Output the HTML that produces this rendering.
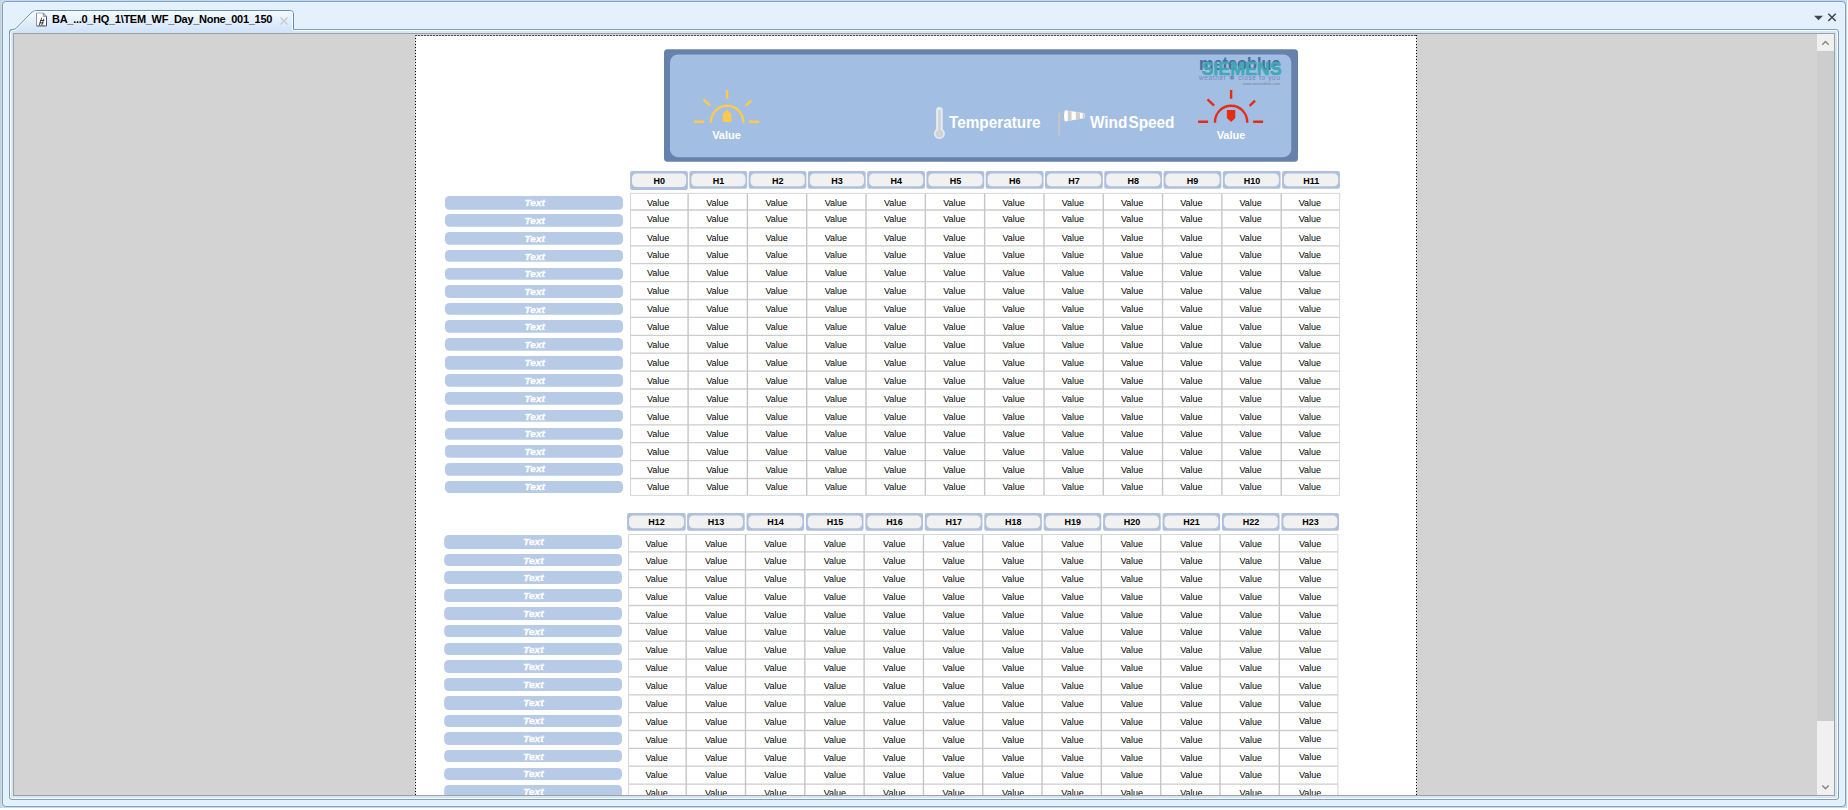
<!DOCTYPE html>
<html lang="en"><head><meta charset="utf-8"><title>TEM_WF_Day_None_001_150</title>
<style>
html,body{margin:0;padding:0;background:#fff;}
body{width:1848px;height:810px;overflow:hidden;position:relative;font-family:"Liberation Sans",sans-serif;}
.abs{position:absolute;}
#edge{left:0;top:0;width:1px;height:808px;background:#d4d0c8;}
#halo{left:1px;top:0;width:1846px;height:808px;background:#bfdcfb;}
#outer{left:2px;top:1px;width:1842px;height:804px;border:1px solid #7e9fbf;border-radius:4px;background:#e4f0fc;box-shadow:inset 0 0 0 1px #ebf5fe;}
#frame{left:9px;top:29px;width:1828px;height:769px;border:1px solid #7e9fbf;border-radius:3px;background:#d5e6f8;box-shadow:inset 0 0 0 1px #ffffff;}
#viewb{left:13px;top:33px;width:1820px;height:761px;border:1px solid #a0a0a0;background:#d3d3d3;}
#view{left:14px;top:34px;width:1820px;height:761px;overflow:hidden;background:#d3d3d3;}
#sb{left:1803px;top:0;width:17px;height:761px;background:#f0f0f0;}
#thumb{left:0;top:17px;width:17px;height:670px;background:#cdcdcd;}
svg text{font-family:"Liberation Sans",sans-serif;}
#tabtxt{left:52px;top:11px;height:17px;line-height:17px;font-size:11px;letter-spacing:-0.29px;font-weight:bold;color:#000;white-space:nowrap;}
</style></head>
<body>
<div class="abs" id="edge"></div>
<div class="abs" id="halo"></div>
<div class="abs" id="outer"></div>
<div class="abs" id="frame"></div>
<svg class="abs" style="left:0;top:0" width="400" height="34" viewBox="0 0 400 34">
<defs><linearGradient id="tg" x1="0" y1="0" x2="0" y2="1"><stop offset="0" stop-color="#f7fbff"/><stop offset="0.45" stop-color="#e4effc"/><stop offset="1" stop-color="#cfe2f8"/></linearGradient></defs>
<path d="M10.5 33 V32 Q10.5 29.5 13 29.5 Q15 29.5 16.5 28 L31 13 Q33.5 10.5 37 10.5 H290 Q293.5 10.5 293.5 14 V29.5 V33 Z" fill="url(#tg)"/>
<path d="M9.5 34 V32.5 Q9.5 29.5 13 29.5 Q15 29.5 16.5 28 L31 13 Q33.5 10.5 37 10.5 H290 Q293.5 10.5 293.5 14 V29.5" fill="none" stroke="#5c93b4" stroke-width="1"/>
<path d="M10.5 34 V32.5 Q10.5 30.5 13 30.5 Q15.5 30.5 17.2 28.8 L31.8 13.8 Q34 11.5 37 11.5 H290 Q292.5 11.5 292.5 14 V30.5" fill="none" stroke="#ffffff" stroke-width="1"/>
<g transform="translate(36,12.5)"><path d="M0.5 0.5 H7.3 L10.5 3.9 V13.6 H0.5 Z" fill="#fff"/><path d="M0.5 13.6 V0.5" stroke="#8f8db6" fill="none"/><path d="M0.5 0.5 H7.3" stroke="#aeacd0" fill="none"/><path d="M7.3 0.5 L10.5 3.9 V13.6" stroke="#4a5082" fill="none"/><path d="M0.5 13.6 H10.5" stroke="#6a6f98" fill="none"/><path d="M7.3 0.5 V3.9 H10.5" fill="#c9cce0" stroke="#6a6f98" stroke-width="0.7"/><path d="M3.3 12.9 L5.7 5.2 M5.7 12.9 L7.9 6.2 M4.3 8 H8.3 M3.3 10.4 H7.6" stroke="#1c1c1c" stroke-width="0.8" fill="none"/><path d="M1.6 12.9 H9.4" stroke="#66756a" stroke-width="0.8" fill="none"/></g>
<path d="M280.5 17.5 L287.5 24.5 M287.5 17.5 L280.5 24.5" stroke="#c9c9c9" stroke-width="1.3" fill="none"/>
</svg>
<div class="abs" id="tabtxt">BA_...0_HQ_1\TEM_WF_Day_None_001_150</div>
<svg class="abs" style="left:1808px;top:10px" width="34" height="16" viewBox="1808 10 34 16">
<path d="M1814 15.8 H1823 L1818.5 20.2 Z" fill="#3c4650"/>
<path d="M1828.3 13.8 L1835.7 21 M1835.7 13.8 L1828.3 21" stroke="#3c4650" stroke-width="1.5" fill="none"/>
</svg>
<div class="abs" id="viewb"></div>
<div class="abs" id="view">
<svg class="abs" style="left:0;top:0" width="1803" height="761" viewBox="14 34 1803 761">
<rect x="416" y="36" width="1000" height="800" fill="#fff"/>
<path d="M415.5 35 V800" stroke="#000" stroke-width="1" stroke-dasharray="1 2" fill="none"/>
<path d="M1416.5 35 V800" stroke="#000" stroke-width="1" stroke-dasharray="1 2" fill="none"/>
<path d="M415 35.5 H1417" stroke="#4a4a4a" stroke-width="1" stroke-dasharray="2 1" fill="none"/>
<rect x="664" y="49.2" width="634" height="112.6" rx="3.5" fill="#6482ab"/>
<rect x="670" y="54.4" width="621.3" height="102.8" rx="8" fill="#a3bee3"/>
<g stroke="#ffca4b" stroke-width="2.4" fill="none"><path d="M711.0 122.7 V121.9 A16.1 16.1 0 0 1 743.2 121.9 V122.7"/><path d="M727.1 90 V98.8"/><path d="M694.1 121.8 H704.1 M749.1 121.8 H759.1"/><path d="M703.5 99.3 L710.1 105.6 M745.6 105.8 L751.1 100.6"/></g><path d="M722.8 122 V113.8 L727.1 110 L731.4 113.8 V122 Z" fill="#ffca4b"/>
<g stroke="#e62d14" stroke-width="2.4" fill="none"><path d="M1215.0 122.7 V121.9 A16.1 16.1 0 0 1 1247.2 121.9 V122.7"/><path d="M1231.1 90 V98.8"/><path d="M1198.1 121.8 H1208.1 M1253.1 121.8 H1263.1"/><path d="M1207.5 99.3 L1214.1 105.6 M1249.6 105.8 L1255.1 100.6"/></g><path d="M1226.9 110 H1235.3 V118 L1231.1 122 L1226.9 118 Z" fill="#e62d14"/>
<text x="726.5" y="139" font-size="11" font-weight="bold" fill="#fff" text-anchor="middle">Value</text>
<text x="1231" y="139" font-size="11" font-weight="bold" fill="#fff" text-anchor="middle">Value</text>
<g><path d="M936.1 110.3 A3.3 3.3 0 0 1 942.7 110.3 V129.2 A5.5 5.5 0 1 1 936.1 129.2 Z" fill="#e7eaf2"/><path d="M938.2 111 A1.3 1.3 0 0 1 940.8 111 V130 A3.9 3.9 0 1 1 938.2 130 Z" fill="#d3d3d3"/></g>
<text x="949" y="128" font-size="17" font-weight="bold" fill="#fff" textLength="91.6" lengthAdjust="spacingAndGlyphs">Temperature</text>
<g><rect x="1058" y="112.4" width="2" height="23.5" fill="#c4c4c4"/><path d="M1060 116 L1065 110.6 M1060 116 L1065 121.2" stroke="#c4c4c4" stroke-width="1" fill="none"/><path d="M1065 110.2 Q1063 116 1065 121.6 L1084.8 118 V113.2 Z" fill="#fff"/><path d="M1067.8 110.7 L1071.6 111.4 V120.4 L1067.8 121.1 Z M1075.8 112 L1080 112.6 V118.9 L1075.8 119.6 Z M1082.6 113 L1084.8 113.3 V118 L1082.6 118.4 Z" fill="#cfcfcf"/></g>
<text x="1090" y="128" font-size="17" font-weight="bold" fill="#fff" textLength="84.5" lengthAdjust="spacingAndGlyphs">Wind<tspan dx="1.2">Speed</tspan></text>
<text x="1199" y="69.6" font-size="19" font-weight="bold" fill="#4b6b9c" textLength="81.5" lengthAdjust="spacingAndGlyphs">meteoblue</text>
<text x="1199" y="80" font-size="6.5" fill="#6d8aba" textLength="81" lengthAdjust="spacing">weather ✱ close to you</text>
<text x="1243" y="85" font-size="3.6" fill="#7a7f95" textLength="37" lengthAdjust="spacingAndGlyphs">www.meteoblue.com</text>
<text x="1201.5" y="74.9" font-size="18.2" font-weight="bold" fill="#40a9b5" stroke="#40a9b5" stroke-width="0.5" textLength="80" lengthAdjust="spacingAndGlyphs">SIEMENS</text>
<rect x="630.10" y="170.9" width="57.8" height="19.0" rx="2" fill="#afc0da"/><rect x="632.00" y="173.5" width="54.2" height="13.5" rx="4.5" fill="#f1f1f1"/><text x="659.20" y="184.0" font-size="9" font-weight="bold" fill="#000" text-anchor="middle">H0</text>
<rect x="689.37" y="170.9" width="57.8" height="17.9" rx="2" fill="#afc0da"/><rect x="691.27" y="173.5" width="54.2" height="12.8" rx="4.5" fill="#f1f1f1"/><text x="718.47" y="184.0" font-size="9" font-weight="bold" fill="#000" text-anchor="middle">H1</text>
<rect x="748.64" y="170.9" width="57.8" height="17.9" rx="2" fill="#afc0da"/><rect x="750.54" y="173.5" width="54.2" height="12.8" rx="4.5" fill="#f1f1f1"/><text x="777.74" y="184.0" font-size="9" font-weight="bold" fill="#000" text-anchor="middle">H2</text>
<rect x="807.91" y="170.9" width="57.8" height="17.9" rx="2" fill="#afc0da"/><rect x="809.81" y="173.5" width="54.2" height="12.8" rx="4.5" fill="#f1f1f1"/><text x="837.01" y="184.0" font-size="9" font-weight="bold" fill="#000" text-anchor="middle">H3</text>
<rect x="867.18" y="170.9" width="57.8" height="17.9" rx="2" fill="#afc0da"/><rect x="869.08" y="173.5" width="54.2" height="12.8" rx="4.5" fill="#f1f1f1"/><text x="896.28" y="184.0" font-size="9" font-weight="bold" fill="#000" text-anchor="middle">H4</text>
<rect x="926.45" y="170.9" width="57.8" height="17.9" rx="2" fill="#afc0da"/><rect x="928.35" y="173.5" width="54.2" height="12.8" rx="4.5" fill="#f1f1f1"/><text x="955.55" y="184.0" font-size="9" font-weight="bold" fill="#000" text-anchor="middle">H5</text>
<rect x="985.72" y="170.9" width="57.8" height="17.9" rx="2" fill="#afc0da"/><rect x="987.62" y="173.5" width="54.2" height="12.8" rx="4.5" fill="#f1f1f1"/><text x="1014.82" y="184.0" font-size="9" font-weight="bold" fill="#000" text-anchor="middle">H6</text>
<rect x="1044.99" y="170.9" width="57.8" height="17.9" rx="2" fill="#afc0da"/><rect x="1046.89" y="173.5" width="54.2" height="12.8" rx="4.5" fill="#f1f1f1"/><text x="1074.09" y="184.0" font-size="9" font-weight="bold" fill="#000" text-anchor="middle">H7</text>
<rect x="1104.26" y="170.9" width="57.8" height="17.9" rx="2" fill="#afc0da"/><rect x="1106.16" y="173.5" width="54.2" height="12.8" rx="4.5" fill="#f1f1f1"/><text x="1133.36" y="184.0" font-size="9" font-weight="bold" fill="#000" text-anchor="middle">H8</text>
<rect x="1163.53" y="170.9" width="57.8" height="17.9" rx="2" fill="#afc0da"/><rect x="1165.43" y="173.5" width="54.2" height="12.8" rx="4.5" fill="#f1f1f1"/><text x="1192.63" y="184.0" font-size="9" font-weight="bold" fill="#000" text-anchor="middle">H9</text>
<rect x="1222.80" y="170.9" width="57.8" height="17.9" rx="2" fill="#afc0da"/><rect x="1224.70" y="173.5" width="54.2" height="12.8" rx="4.5" fill="#f1f1f1"/><text x="1251.90" y="184.0" font-size="9" font-weight="bold" fill="#000" text-anchor="middle">H10</text>
<rect x="1282.07" y="170.9" width="57.8" height="17.9" rx="2" fill="#afc0da"/><rect x="1283.97" y="173.5" width="54.2" height="12.8" rx="4.5" fill="#f1f1f1"/><text x="1311.17" y="184.0" font-size="9" font-weight="bold" fill="#000" text-anchor="middle">H11</text>
<path d="M630.55 210.00 H1339.60 M630.55 227.90 H1339.60 M630.55 245.80 H1339.60 M630.55 263.70 H1339.60 M630.55 281.60 H1339.60 M630.55 299.50 H1339.60 M630.55 317.40 H1339.60 M630.55 335.30 H1339.60 M630.55 353.20 H1339.60 M630.55 371.10 H1339.60 M630.55 389.00 H1339.60 M630.55 406.90 H1339.60 M630.55 424.80 H1339.60 M630.55 442.70 H1339.60 M630.55 460.60 H1339.60 M630.55 478.50 H1339.60 " stroke="#cdcdcd" stroke-width="1.3" fill="none"/><path d="M688.10 193.40 V495.40 M747.41 193.40 V495.40 M806.72 193.40 V495.40 M866.03 193.40 V495.40 M925.34 193.40 V495.40 M984.65 193.40 V495.40 M1043.96 193.40 V495.40 M1103.27 193.40 V495.40 M1162.58 193.40 V495.40 M1221.89 193.40 V495.40 M1281.20 193.40 V495.40 " stroke="#c6c6c6" stroke-width="1.4" fill="none"/><path d="M630.55 193.40 H1339.60 V495.40 H630.55 Z" stroke="#d2d2d2" stroke-width="0.9" fill="none"/>
<g font-size="9" fill="#000" text-anchor="middle"><text x="658.10" y="206">Value</text><text x="717.36" y="206">Value</text><text x="776.62" y="206">Value</text><text x="835.88" y="206">Value</text><text x="895.14" y="206">Value</text><text x="954.40" y="206">Value</text><text x="1013.66" y="206">Value</text><text x="1072.92" y="206">Value</text><text x="1132.18" y="206">Value</text><text x="1191.44" y="206">Value</text><text x="1250.70" y="206">Value</text><text x="1309.96" y="206">Value</text></g>
<g font-size="9" fill="#000" text-anchor="middle"><text x="658.10" y="222">Value</text><text x="717.36" y="222">Value</text><text x="776.62" y="222">Value</text><text x="835.88" y="222">Value</text><text x="895.14" y="222">Value</text><text x="954.40" y="222">Value</text><text x="1013.66" y="222">Value</text><text x="1072.92" y="222">Value</text><text x="1132.18" y="222">Value</text><text x="1191.44" y="222">Value</text><text x="1250.70" y="222">Value</text><text x="1309.96" y="222">Value</text></g>
<g font-size="9" fill="#000" text-anchor="middle"><text x="658.10" y="241">Value</text><text x="717.36" y="241">Value</text><text x="776.62" y="241">Value</text><text x="835.88" y="241">Value</text><text x="895.14" y="241">Value</text><text x="954.40" y="241">Value</text><text x="1013.66" y="241">Value</text><text x="1072.92" y="241">Value</text><text x="1132.18" y="241">Value</text><text x="1191.44" y="241">Value</text><text x="1250.70" y="241">Value</text><text x="1309.96" y="241">Value</text></g>
<g font-size="9" fill="#000" text-anchor="middle"><text x="658.10" y="258">Value</text><text x="717.36" y="258">Value</text><text x="776.62" y="258">Value</text><text x="835.88" y="258">Value</text><text x="895.14" y="258">Value</text><text x="954.40" y="258">Value</text><text x="1013.66" y="258">Value</text><text x="1072.92" y="258">Value</text><text x="1132.18" y="258">Value</text><text x="1191.44" y="258">Value</text><text x="1250.70" y="258">Value</text><text x="1309.96" y="258">Value</text></g>
<g font-size="9" fill="#000" text-anchor="middle"><text x="658.10" y="276">Value</text><text x="717.36" y="276">Value</text><text x="776.62" y="276">Value</text><text x="835.88" y="276">Value</text><text x="895.14" y="276">Value</text><text x="954.40" y="276">Value</text><text x="1013.66" y="276">Value</text><text x="1072.92" y="276">Value</text><text x="1132.18" y="276">Value</text><text x="1191.44" y="276">Value</text><text x="1250.70" y="276">Value</text><text x="1309.96" y="276">Value</text></g>
<g font-size="9" fill="#000" text-anchor="middle"><text x="658.10" y="294">Value</text><text x="717.36" y="294">Value</text><text x="776.62" y="294">Value</text><text x="835.88" y="294">Value</text><text x="895.14" y="294">Value</text><text x="954.40" y="294">Value</text><text x="1013.66" y="294">Value</text><text x="1072.92" y="294">Value</text><text x="1132.18" y="294">Value</text><text x="1191.44" y="294">Value</text><text x="1250.70" y="294">Value</text><text x="1309.96" y="294">Value</text></g>
<g font-size="9" fill="#000" text-anchor="middle"><text x="658.10" y="312">Value</text><text x="717.36" y="312">Value</text><text x="776.62" y="312">Value</text><text x="835.88" y="312">Value</text><text x="895.14" y="312">Value</text><text x="954.40" y="312">Value</text><text x="1013.66" y="312">Value</text><text x="1072.92" y="312">Value</text><text x="1132.18" y="312">Value</text><text x="1191.44" y="312">Value</text><text x="1250.70" y="312">Value</text><text x="1309.96" y="312">Value</text></g>
<g font-size="9" fill="#000" text-anchor="middle"><text x="658.10" y="330">Value</text><text x="717.36" y="330">Value</text><text x="776.62" y="330">Value</text><text x="835.88" y="330">Value</text><text x="895.14" y="330">Value</text><text x="954.40" y="330">Value</text><text x="1013.66" y="330">Value</text><text x="1072.92" y="330">Value</text><text x="1132.18" y="330">Value</text><text x="1191.44" y="330">Value</text><text x="1250.70" y="330">Value</text><text x="1309.96" y="330">Value</text></g>
<g font-size="9" fill="#000" text-anchor="middle"><text x="658.10" y="348">Value</text><text x="717.36" y="348">Value</text><text x="776.62" y="348">Value</text><text x="835.88" y="348">Value</text><text x="895.14" y="348">Value</text><text x="954.40" y="348">Value</text><text x="1013.66" y="348">Value</text><text x="1072.92" y="348">Value</text><text x="1132.18" y="348">Value</text><text x="1191.44" y="348">Value</text><text x="1250.70" y="348">Value</text><text x="1309.96" y="348">Value</text></g>
<g font-size="9" fill="#000" text-anchor="middle"><text x="658.10" y="366">Value</text><text x="717.36" y="366">Value</text><text x="776.62" y="366">Value</text><text x="835.88" y="366">Value</text><text x="895.14" y="366">Value</text><text x="954.40" y="366">Value</text><text x="1013.66" y="366">Value</text><text x="1072.92" y="366">Value</text><text x="1132.18" y="366">Value</text><text x="1191.44" y="366">Value</text><text x="1250.70" y="366">Value</text><text x="1309.96" y="366">Value</text></g>
<g font-size="9" fill="#000" text-anchor="middle"><text x="658.10" y="384">Value</text><text x="717.36" y="384">Value</text><text x="776.62" y="384">Value</text><text x="835.88" y="384">Value</text><text x="895.14" y="384">Value</text><text x="954.40" y="384">Value</text><text x="1013.66" y="384">Value</text><text x="1072.92" y="384">Value</text><text x="1132.18" y="384">Value</text><text x="1191.44" y="384">Value</text><text x="1250.70" y="384">Value</text><text x="1309.96" y="384">Value</text></g>
<g font-size="9" fill="#000" text-anchor="middle"><text x="658.10" y="402">Value</text><text x="717.36" y="402">Value</text><text x="776.62" y="402">Value</text><text x="835.88" y="402">Value</text><text x="895.14" y="402">Value</text><text x="954.40" y="402">Value</text><text x="1013.66" y="402">Value</text><text x="1072.92" y="402">Value</text><text x="1132.18" y="402">Value</text><text x="1191.44" y="402">Value</text><text x="1250.70" y="402">Value</text><text x="1309.96" y="402">Value</text></g>
<g font-size="9" fill="#000" text-anchor="middle"><text x="658.10" y="420">Value</text><text x="717.36" y="420">Value</text><text x="776.62" y="420">Value</text><text x="835.88" y="420">Value</text><text x="895.14" y="420">Value</text><text x="954.40" y="420">Value</text><text x="1013.66" y="420">Value</text><text x="1072.92" y="420">Value</text><text x="1132.18" y="420">Value</text><text x="1191.44" y="420">Value</text><text x="1250.70" y="420">Value</text><text x="1309.96" y="420">Value</text></g>
<g font-size="9" fill="#000" text-anchor="middle"><text x="658.10" y="437">Value</text><text x="717.36" y="437">Value</text><text x="776.62" y="437">Value</text><text x="835.88" y="437">Value</text><text x="895.14" y="437">Value</text><text x="954.40" y="437">Value</text><text x="1013.66" y="437">Value</text><text x="1072.92" y="437">Value</text><text x="1132.18" y="437">Value</text><text x="1191.44" y="437">Value</text><text x="1250.70" y="437">Value</text><text x="1309.96" y="437">Value</text></g>
<g font-size="9" fill="#000" text-anchor="middle"><text x="658.10" y="455">Value</text><text x="717.36" y="455">Value</text><text x="776.62" y="455">Value</text><text x="835.88" y="455">Value</text><text x="895.14" y="455">Value</text><text x="954.40" y="455">Value</text><text x="1013.66" y="455">Value</text><text x="1072.92" y="455">Value</text><text x="1132.18" y="455">Value</text><text x="1191.44" y="455">Value</text><text x="1250.70" y="455">Value</text><text x="1309.96" y="455">Value</text></g>
<g font-size="9" fill="#000" text-anchor="middle"><text x="658.10" y="473">Value</text><text x="717.36" y="473">Value</text><text x="776.62" y="473">Value</text><text x="835.88" y="473">Value</text><text x="895.14" y="473">Value</text><text x="954.40" y="473">Value</text><text x="1013.66" y="473">Value</text><text x="1072.92" y="473">Value</text><text x="1132.18" y="473">Value</text><text x="1191.44" y="473">Value</text><text x="1250.70" y="473">Value</text><text x="1309.96" y="473">Value</text></g>
<g font-size="9" fill="#000" text-anchor="middle"><text x="658.10" y="490">Value</text><text x="717.36" y="490">Value</text><text x="776.62" y="490">Value</text><text x="835.88" y="490">Value</text><text x="895.14" y="490">Value</text><text x="954.40" y="490">Value</text><text x="1013.66" y="490">Value</text><text x="1072.92" y="490">Value</text><text x="1132.18" y="490">Value</text><text x="1191.44" y="490">Value</text><text x="1250.70" y="490">Value</text><text x="1309.96" y="490">Value</text></g>
<rect x="445.0" y="196.00" width="178.0" height="13.80" rx="4.5" fill="#b7cbe7"/><text x="534.7" y="206" font-size="9.6" font-weight="bold" font-style="italic" fill="#fff" stroke="#fff" stroke-width="0.3" text-anchor="middle" textLength="20.2" lengthAdjust="spacingAndGlyphs">Text</text>
<rect x="445.0" y="214.00" width="178.0" height="12.80" rx="4.5" fill="#b7cbe7"/><text x="534.7" y="224" font-size="9.6" font-weight="bold" font-style="italic" fill="#fff" stroke="#fff" stroke-width="0.3" text-anchor="middle" textLength="20.2" lengthAdjust="spacingAndGlyphs">Text</text>
<rect x="445.0" y="232.00" width="178.0" height="12.80" rx="4.5" fill="#b7cbe7"/><text x="534.7" y="242" font-size="9.6" font-weight="bold" font-style="italic" fill="#fff" stroke="#fff" stroke-width="0.3" text-anchor="middle" textLength="20.2" lengthAdjust="spacingAndGlyphs">Text</text>
<rect x="445.0" y="250.00" width="178.0" height="11.80" rx="4.5" fill="#b7cbe7"/><text x="534.7" y="260" font-size="9.6" font-weight="bold" font-style="italic" fill="#fff" stroke="#fff" stroke-width="0.3" text-anchor="middle" textLength="20.2" lengthAdjust="spacingAndGlyphs">Text</text>
<rect x="445.0" y="268.00" width="178.0" height="11.70" rx="4.5" fill="#b7cbe7"/><text x="534.7" y="277" font-size="9.6" font-weight="bold" font-style="italic" fill="#fff" stroke="#fff" stroke-width="0.3" text-anchor="middle" textLength="20.2" lengthAdjust="spacingAndGlyphs">Text</text>
<rect x="445.0" y="285.00" width="178.0" height="13.00" rx="4.5" fill="#b7cbe7"/><text x="534.7" y="295" font-size="9.6" font-weight="bold" font-style="italic" fill="#fff" stroke="#fff" stroke-width="0.3" text-anchor="middle" textLength="20.2" lengthAdjust="spacingAndGlyphs">Text</text>
<rect x="445.0" y="303.00" width="178.0" height="11.80" rx="4.5" fill="#b7cbe7"/><text x="534.7" y="313" font-size="9.6" font-weight="bold" font-style="italic" fill="#fff" stroke="#fff" stroke-width="0.3" text-anchor="middle" textLength="20.2" lengthAdjust="spacingAndGlyphs">Text</text>
<rect x="445.0" y="320.00" width="178.0" height="12.70" rx="4.5" fill="#b7cbe7"/><text x="534.7" y="330" font-size="9.6" font-weight="bold" font-style="italic" fill="#fff" stroke="#fff" stroke-width="0.3" text-anchor="middle" textLength="20.2" lengthAdjust="spacingAndGlyphs">Text</text>
<rect x="445.0" y="338.00" width="178.0" height="12.80" rx="4.5" fill="#b7cbe7"/><text x="534.7" y="348" font-size="9.6" font-weight="bold" font-style="italic" fill="#fff" stroke="#fff" stroke-width="0.3" text-anchor="middle" textLength="20.2" lengthAdjust="spacingAndGlyphs">Text</text>
<rect x="445.0" y="356.00" width="178.0" height="13.80" rx="4.5" fill="#b7cbe7"/><text x="534.7" y="366" font-size="9.6" font-weight="bold" font-style="italic" fill="#fff" stroke="#fff" stroke-width="0.3" text-anchor="middle" textLength="20.2" lengthAdjust="spacingAndGlyphs">Text</text>
<rect x="445.0" y="374.00" width="178.0" height="12.80" rx="4.5" fill="#b7cbe7"/><text x="534.7" y="384" font-size="9.6" font-weight="bold" font-style="italic" fill="#fff" stroke="#fff" stroke-width="0.3" text-anchor="middle" textLength="20.2" lengthAdjust="spacingAndGlyphs">Text</text>
<rect x="445.0" y="392.00" width="178.0" height="12.80" rx="4.5" fill="#b7cbe7"/><text x="534.7" y="402" font-size="9.6" font-weight="bold" font-style="italic" fill="#fff" stroke="#fff" stroke-width="0.3" text-anchor="middle" textLength="20.2" lengthAdjust="spacingAndGlyphs">Text</text>
<rect x="445.0" y="410.00" width="178.0" height="11.80" rx="4.5" fill="#b7cbe7"/><text x="534.7" y="420" font-size="9.6" font-weight="bold" font-style="italic" fill="#fff" stroke="#fff" stroke-width="0.3" text-anchor="middle" textLength="20.2" lengthAdjust="spacingAndGlyphs">Text</text>
<rect x="445.0" y="428.00" width="178.0" height="11.80" rx="4.5" fill="#b7cbe7"/><text x="534.7" y="437" font-size="9.6" font-weight="bold" font-style="italic" fill="#fff" stroke="#fff" stroke-width="0.3" text-anchor="middle" textLength="20.2" lengthAdjust="spacingAndGlyphs">Text</text>
<rect x="445.0" y="445.00" width="178.0" height="12.80" rx="4.5" fill="#b7cbe7"/><text x="534.7" y="455" font-size="9.6" font-weight="bold" font-style="italic" fill="#fff" stroke="#fff" stroke-width="0.3" text-anchor="middle" textLength="20.2" lengthAdjust="spacingAndGlyphs">Text</text>
<rect x="445.0" y="463.00" width="178.0" height="12.80" rx="4.5" fill="#b7cbe7"/><text x="534.7" y="472" font-size="9.6" font-weight="bold" font-style="italic" fill="#fff" stroke="#fff" stroke-width="0.3" text-anchor="middle" textLength="20.2" lengthAdjust="spacingAndGlyphs">Text</text>
<rect x="445.0" y="481.00" width="178.0" height="12.00" rx="4.5" fill="#b7cbe7"/><text x="534.7" y="490" font-size="9.6" font-weight="bold" font-style="italic" fill="#fff" stroke="#fff" stroke-width="0.3" text-anchor="middle" textLength="20.2" lengthAdjust="spacingAndGlyphs">Text</text>
<rect x="627.10" y="512.9" width="58.6" height="17.9" rx="2" fill="#afc0da"/><rect x="629.00" y="515.5" width="55.0" height="12.8" rx="4.5" fill="#f1f1f1"/><text x="656.60" y="524.8" font-size="9" font-weight="bold" fill="#000" text-anchor="middle">H12</text>
<rect x="687.10" y="512.9" width="57.6" height="17.9" rx="2" fill="#afc0da"/><rect x="689.00" y="515.5" width="54.0" height="12.8" rx="4.5" fill="#f1f1f1"/><text x="716.10" y="524.8" font-size="9" font-weight="bold" fill="#000" text-anchor="middle">H13</text>
<rect x="746.53" y="512.9" width="57.6" height="17.9" rx="2" fill="#afc0da"/><rect x="748.43" y="515.5" width="54.0" height="12.8" rx="4.5" fill="#f1f1f1"/><text x="775.53" y="524.8" font-size="9" font-weight="bold" fill="#000" text-anchor="middle">H14</text>
<rect x="805.96" y="512.9" width="57.6" height="17.9" rx="2" fill="#afc0da"/><rect x="807.86" y="515.5" width="54.0" height="12.8" rx="4.5" fill="#f1f1f1"/><text x="834.96" y="524.8" font-size="9" font-weight="bold" fill="#000" text-anchor="middle">H15</text>
<rect x="865.39" y="512.9" width="57.6" height="17.9" rx="2" fill="#afc0da"/><rect x="867.29" y="515.5" width="54.0" height="12.8" rx="4.5" fill="#f1f1f1"/><text x="894.39" y="524.8" font-size="9" font-weight="bold" fill="#000" text-anchor="middle">H16</text>
<rect x="924.82" y="512.9" width="57.6" height="17.9" rx="2" fill="#afc0da"/><rect x="926.72" y="515.5" width="54.0" height="12.8" rx="4.5" fill="#f1f1f1"/><text x="953.82" y="524.8" font-size="9" font-weight="bold" fill="#000" text-anchor="middle">H17</text>
<rect x="984.25" y="512.9" width="57.6" height="17.9" rx="2" fill="#afc0da"/><rect x="986.15" y="515.5" width="54.0" height="12.8" rx="4.5" fill="#f1f1f1"/><text x="1013.25" y="524.8" font-size="9" font-weight="bold" fill="#000" text-anchor="middle">H18</text>
<rect x="1043.68" y="512.9" width="57.6" height="17.9" rx="2" fill="#afc0da"/><rect x="1045.58" y="515.5" width="54.0" height="12.8" rx="4.5" fill="#f1f1f1"/><text x="1072.68" y="524.8" font-size="9" font-weight="bold" fill="#000" text-anchor="middle">H19</text>
<rect x="1103.11" y="512.9" width="57.6" height="17.9" rx="2" fill="#afc0da"/><rect x="1105.01" y="515.5" width="54.0" height="12.8" rx="4.5" fill="#f1f1f1"/><text x="1132.11" y="524.8" font-size="9" font-weight="bold" fill="#000" text-anchor="middle">H20</text>
<rect x="1162.54" y="512.9" width="57.6" height="17.9" rx="2" fill="#afc0da"/><rect x="1164.44" y="515.5" width="54.0" height="12.8" rx="4.5" fill="#f1f1f1"/><text x="1191.54" y="524.8" font-size="9" font-weight="bold" fill="#000" text-anchor="middle">H21</text>
<rect x="1221.97" y="512.9" width="57.6" height="17.9" rx="2" fill="#afc0da"/><rect x="1223.87" y="515.5" width="54.0" height="12.8" rx="4.5" fill="#f1f1f1"/><text x="1250.97" y="524.8" font-size="9" font-weight="bold" fill="#000" text-anchor="middle">H22</text>
<rect x="1281.40" y="512.9" width="57.6" height="17.9" rx="2" fill="#afc0da"/><rect x="1283.30" y="515.5" width="54.0" height="12.8" rx="4.5" fill="#f1f1f1"/><text x="1310.40" y="524.8" font-size="9" font-weight="bold" fill="#000" text-anchor="middle">H23</text>
<path d="M628.60 551.90 H1337.90 M628.60 569.76 H1337.90 M628.60 587.62 H1337.90 M628.60 605.48 H1337.90 M628.60 623.34 H1337.90 M628.60 641.20 H1337.90 M628.60 659.06 H1337.90 M628.60 676.92 H1337.90 M628.60 694.78 H1337.90 M628.60 712.64 H1337.90 M628.60 730.50 H1337.90 M628.60 748.36 H1337.90 M628.60 766.22 H1337.90 M628.60 784.08 H1337.90 M628.60 801.94 H1337.90 M628.60 819.80 H1337.90 " stroke="#cdcdcd" stroke-width="1.3" fill="none"/><path d="M686.20 534.50 V837.66 M745.51 534.50 V837.66 M804.82 534.50 V837.66 M864.13 534.50 V837.66 M923.44 534.50 V837.66 M982.75 534.50 V837.66 M1042.06 534.50 V837.66 M1101.37 534.50 V837.66 M1160.68 534.50 V837.66 M1219.99 534.50 V837.66 M1279.30 534.50 V837.66 " stroke="#c6c6c6" stroke-width="1.4" fill="none"/><path d="M628.60 534.50 H1337.90 V837.66 H628.60 Z" stroke="#d2d2d2" stroke-width="0.9" fill="none"/>
<g font-size="9" fill="#000" text-anchor="middle"><text x="656.65" y="547">Value</text><text x="716.06" y="547">Value</text><text x="775.47" y="547">Value</text><text x="834.88" y="547">Value</text><text x="894.29" y="547">Value</text><text x="953.70" y="547">Value</text><text x="1013.11" y="547">Value</text><text x="1072.52" y="547">Value</text><text x="1131.93" y="547">Value</text><text x="1191.34" y="547">Value</text><text x="1250.75" y="547">Value</text><text x="1310.16" y="547">Value</text></g>
<g font-size="9" fill="#000" text-anchor="middle"><text x="656.65" y="564">Value</text><text x="716.06" y="564">Value</text><text x="775.47" y="564">Value</text><text x="834.88" y="564">Value</text><text x="894.29" y="564">Value</text><text x="953.70" y="564">Value</text><text x="1013.11" y="564">Value</text><text x="1072.52" y="564">Value</text><text x="1131.93" y="564">Value</text><text x="1191.34" y="564">Value</text><text x="1250.75" y="564">Value</text><text x="1310.16" y="564">Value</text></g>
<g font-size="9" fill="#000" text-anchor="middle"><text x="656.65" y="582">Value</text><text x="716.06" y="582">Value</text><text x="775.47" y="582">Value</text><text x="834.88" y="582">Value</text><text x="894.29" y="582">Value</text><text x="953.70" y="582">Value</text><text x="1013.11" y="582">Value</text><text x="1072.52" y="582">Value</text><text x="1131.93" y="582">Value</text><text x="1191.34" y="582">Value</text><text x="1250.75" y="582">Value</text><text x="1310.16" y="582">Value</text></g>
<g font-size="9" fill="#000" text-anchor="middle"><text x="656.65" y="600">Value</text><text x="716.06" y="600">Value</text><text x="775.47" y="600">Value</text><text x="834.88" y="600">Value</text><text x="894.29" y="600">Value</text><text x="953.70" y="600">Value</text><text x="1013.11" y="600">Value</text><text x="1072.52" y="600">Value</text><text x="1131.93" y="600">Value</text><text x="1191.34" y="600">Value</text><text x="1250.75" y="600">Value</text><text x="1310.16" y="600">Value</text></g>
<g font-size="9" fill="#000" text-anchor="middle"><text x="656.65" y="618">Value</text><text x="716.06" y="618">Value</text><text x="775.47" y="618">Value</text><text x="834.88" y="618">Value</text><text x="894.29" y="618">Value</text><text x="953.70" y="618">Value</text><text x="1013.11" y="618">Value</text><text x="1072.52" y="618">Value</text><text x="1131.93" y="618">Value</text><text x="1191.34" y="618">Value</text><text x="1250.75" y="618">Value</text><text x="1310.16" y="618">Value</text></g>
<g font-size="9" fill="#000" text-anchor="middle"><text x="656.65" y="635">Value</text><text x="716.06" y="635">Value</text><text x="775.47" y="635">Value</text><text x="834.88" y="635">Value</text><text x="894.29" y="635">Value</text><text x="953.70" y="635">Value</text><text x="1013.11" y="635">Value</text><text x="1072.52" y="635">Value</text><text x="1131.93" y="635">Value</text><text x="1191.34" y="635">Value</text><text x="1250.75" y="635">Value</text><text x="1310.16" y="635">Value</text></g>
<g font-size="9" fill="#000" text-anchor="middle"><text x="656.65" y="653">Value</text><text x="716.06" y="653">Value</text><text x="775.47" y="653">Value</text><text x="834.88" y="653">Value</text><text x="894.29" y="653">Value</text><text x="953.70" y="653">Value</text><text x="1013.11" y="653">Value</text><text x="1072.52" y="653">Value</text><text x="1131.93" y="653">Value</text><text x="1191.34" y="653">Value</text><text x="1250.75" y="653">Value</text><text x="1310.16" y="653">Value</text></g>
<g font-size="9" fill="#000" text-anchor="middle"><text x="656.65" y="671">Value</text><text x="716.06" y="671">Value</text><text x="775.47" y="671">Value</text><text x="834.88" y="671">Value</text><text x="894.29" y="671">Value</text><text x="953.70" y="671">Value</text><text x="1013.11" y="671">Value</text><text x="1072.52" y="671">Value</text><text x="1131.93" y="671">Value</text><text x="1191.34" y="671">Value</text><text x="1250.75" y="671">Value</text><text x="1310.16" y="671">Value</text></g>
<g font-size="9" fill="#000" text-anchor="middle"><text x="656.65" y="689">Value</text><text x="716.06" y="689">Value</text><text x="775.47" y="689">Value</text><text x="834.88" y="689">Value</text><text x="894.29" y="689">Value</text><text x="953.70" y="689">Value</text><text x="1013.11" y="689">Value</text><text x="1072.52" y="689">Value</text><text x="1131.93" y="689">Value</text><text x="1191.34" y="689">Value</text><text x="1250.75" y="689">Value</text><text x="1310.16" y="689">Value</text></g>
<g font-size="9" fill="#000" text-anchor="middle"><text x="656.65" y="707">Value</text><text x="716.06" y="707">Value</text><text x="775.47" y="707">Value</text><text x="834.88" y="707">Value</text><text x="894.29" y="707">Value</text><text x="953.70" y="707">Value</text><text x="1013.11" y="707">Value</text><text x="1072.52" y="707">Value</text><text x="1131.93" y="707">Value</text><text x="1191.34" y="707">Value</text><text x="1250.75" y="707">Value</text><text x="1310.16" y="707">Value</text></g>
<g font-size="9" fill="#000" text-anchor="middle"><text x="656.65" y="725">Value</text><text x="716.06" y="725">Value</text><text x="775.47" y="725">Value</text><text x="834.88" y="725">Value</text><text x="894.29" y="725">Value</text><text x="953.70" y="725">Value</text><text x="1013.11" y="725">Value</text><text x="1072.52" y="725">Value</text><text x="1131.93" y="725">Value</text><text x="1191.34" y="725">Value</text><text x="1250.75" y="725">Value</text><text x="1310.16" y="724">Value</text></g>
<g font-size="9" fill="#000" text-anchor="middle"><text x="656.65" y="743">Value</text><text x="716.06" y="743">Value</text><text x="775.47" y="743">Value</text><text x="834.88" y="743">Value</text><text x="894.29" y="743">Value</text><text x="953.70" y="743">Value</text><text x="1013.11" y="743">Value</text><text x="1072.52" y="743">Value</text><text x="1131.93" y="743">Value</text><text x="1191.34" y="743">Value</text><text x="1250.75" y="743">Value</text><text x="1310.16" y="742">Value</text></g>
<g font-size="9" fill="#000" text-anchor="middle"><text x="656.65" y="761">Value</text><text x="716.06" y="761">Value</text><text x="775.47" y="761">Value</text><text x="834.88" y="761">Value</text><text x="894.29" y="761">Value</text><text x="953.70" y="761">Value</text><text x="1013.11" y="761">Value</text><text x="1072.52" y="761">Value</text><text x="1131.93" y="761">Value</text><text x="1191.34" y="761">Value</text><text x="1250.75" y="761">Value</text><text x="1310.16" y="760">Value</text></g>
<g font-size="9" fill="#000" text-anchor="middle"><text x="656.65" y="778">Value</text><text x="716.06" y="778">Value</text><text x="775.47" y="778">Value</text><text x="834.88" y="778">Value</text><text x="894.29" y="778">Value</text><text x="953.70" y="778">Value</text><text x="1013.11" y="778">Value</text><text x="1072.52" y="778">Value</text><text x="1131.93" y="778">Value</text><text x="1191.34" y="778">Value</text><text x="1250.75" y="778">Value</text><text x="1310.16" y="778">Value</text></g>
<g font-size="9" fill="#000" text-anchor="middle"><text x="656.65" y="796">Value</text><text x="716.06" y="796">Value</text><text x="775.47" y="796">Value</text><text x="834.88" y="796">Value</text><text x="894.29" y="796">Value</text><text x="953.70" y="796">Value</text><text x="1013.11" y="796">Value</text><text x="1072.52" y="796">Value</text><text x="1131.93" y="796">Value</text><text x="1191.34" y="796">Value</text><text x="1250.75" y="796">Value</text><text x="1310.16" y="796">Value</text></g>
<g font-size="9" fill="#000" text-anchor="middle"><text x="656.65" y="814">Value</text><text x="716.06" y="814">Value</text><text x="775.47" y="814">Value</text><text x="834.88" y="814">Value</text><text x="894.29" y="814">Value</text><text x="953.70" y="814">Value</text><text x="1013.11" y="814">Value</text><text x="1072.52" y="814">Value</text><text x="1131.93" y="814">Value</text><text x="1191.34" y="814">Value</text><text x="1250.75" y="814">Value</text><text x="1310.16" y="814">Value</text></g>
<rect x="444.2" y="535.00" width="177.8" height="13.90" rx="4.5" fill="#b7cbe7"/><text x="533.4" y="545" font-size="9.6" font-weight="bold" font-style="italic" fill="#fff" stroke="#fff" stroke-width="0.3" text-anchor="middle" textLength="20.2" lengthAdjust="spacingAndGlyphs">Text</text>
<rect x="444.2" y="554.00" width="177.8" height="12.00" rx="4.5" fill="#b7cbe7"/><text x="533.4" y="564" font-size="9.6" font-weight="bold" font-style="italic" fill="#fff" stroke="#fff" stroke-width="0.3" text-anchor="middle" textLength="20.2" lengthAdjust="spacingAndGlyphs">Text</text>
<rect x="444.2" y="571.00" width="177.8" height="12.90" rx="4.5" fill="#b7cbe7"/><text x="533.4" y="581" font-size="9.6" font-weight="bold" font-style="italic" fill="#fff" stroke="#fff" stroke-width="0.3" text-anchor="middle" textLength="20.2" lengthAdjust="spacingAndGlyphs">Text</text>
<rect x="444.2" y="589.00" width="177.8" height="13.00" rx="4.5" fill="#b7cbe7"/><text x="533.4" y="599" font-size="9.6" font-weight="bold" font-style="italic" fill="#fff" stroke="#fff" stroke-width="0.3" text-anchor="middle" textLength="20.2" lengthAdjust="spacingAndGlyphs">Text</text>
<rect x="444.2" y="607.00" width="177.8" height="13.00" rx="4.5" fill="#b7cbe7"/><text x="533.4" y="617" font-size="9.6" font-weight="bold" font-style="italic" fill="#fff" stroke="#fff" stroke-width="0.3" text-anchor="middle" textLength="20.2" lengthAdjust="spacingAndGlyphs">Text</text>
<rect x="444.2" y="625.00" width="177.8" height="12.10" rx="4.5" fill="#b7cbe7"/><text x="533.4" y="635" font-size="9.6" font-weight="bold" font-style="italic" fill="#fff" stroke="#fff" stroke-width="0.3" text-anchor="middle" textLength="20.2" lengthAdjust="spacingAndGlyphs">Text</text>
<rect x="444.2" y="643.00" width="177.8" height="12.00" rx="4.5" fill="#b7cbe7"/><text x="533.4" y="653" font-size="9.6" font-weight="bold" font-style="italic" fill="#fff" stroke="#fff" stroke-width="0.3" text-anchor="middle" textLength="20.2" lengthAdjust="spacingAndGlyphs">Text</text>
<rect x="444.2" y="660.00" width="177.8" height="13.00" rx="4.5" fill="#b7cbe7"/><text x="533.4" y="670" font-size="9.6" font-weight="bold" font-style="italic" fill="#fff" stroke="#fff" stroke-width="0.3" text-anchor="middle" textLength="20.2" lengthAdjust="spacingAndGlyphs">Text</text>
<rect x="444.2" y="678.00" width="177.8" height="13.00" rx="4.5" fill="#b7cbe7"/><text x="533.4" y="688" font-size="9.6" font-weight="bold" font-style="italic" fill="#fff" stroke="#fff" stroke-width="0.3" text-anchor="middle" textLength="20.2" lengthAdjust="spacingAndGlyphs">Text</text>
<rect x="444.2" y="696.00" width="177.8" height="14.00" rx="4.5" fill="#b7cbe7"/><text x="533.4" y="706" font-size="9.6" font-weight="bold" font-style="italic" fill="#fff" stroke="#fff" stroke-width="0.3" text-anchor="middle" textLength="20.2" lengthAdjust="spacingAndGlyphs">Text</text>
<rect x="444.2" y="715.00" width="177.8" height="12.00" rx="4.5" fill="#b7cbe7"/><text x="533.4" y="724" font-size="9.6" font-weight="bold" font-style="italic" fill="#fff" stroke="#fff" stroke-width="0.3" text-anchor="middle" textLength="20.2" lengthAdjust="spacingAndGlyphs">Text</text>
<rect x="444.2" y="732.00" width="177.8" height="13.00" rx="4.5" fill="#b7cbe7"/><text x="533.4" y="742" font-size="9.6" font-weight="bold" font-style="italic" fill="#fff" stroke="#fff" stroke-width="0.3" text-anchor="middle" textLength="20.2" lengthAdjust="spacingAndGlyphs">Text</text>
<rect x="444.2" y="750.00" width="177.8" height="12.00" rx="4.5" fill="#b7cbe7"/><text x="533.4" y="760" font-size="9.6" font-weight="bold" font-style="italic" fill="#fff" stroke="#fff" stroke-width="0.3" text-anchor="middle" textLength="20.2" lengthAdjust="spacingAndGlyphs">Text</text>
<rect x="444.2" y="768.00" width="177.8" height="12.00" rx="4.5" fill="#b7cbe7"/><text x="533.4" y="777" font-size="9.6" font-weight="bold" font-style="italic" fill="#fff" stroke="#fff" stroke-width="0.3" text-anchor="middle" textLength="20.2" lengthAdjust="spacingAndGlyphs">Text</text>
<rect x="444.2" y="785.00" width="177.8" height="13.00" rx="4.5" fill="#b7cbe7"/><text x="533.4" y="795" font-size="9.6" font-weight="bold" font-style="italic" fill="#fff" stroke="#fff" stroke-width="0.3" text-anchor="middle" textLength="20.2" lengthAdjust="spacingAndGlyphs">Text</text>
<rect x="444.2" y="803.00" width="177.8" height="12.00" rx="4.5" fill="#b7cbe7"/><text x="533.4" y="813" font-size="9.6" font-weight="bold" font-style="italic" fill="#fff" stroke="#fff" stroke-width="0.3" text-anchor="middle" textLength="20.2" lengthAdjust="spacingAndGlyphs">Text</text>
</svg>
<div class="abs" id="sb"><div class="abs" id="thumb"></div>
<svg class="abs" style="left:0;top:0" width="17" height="761" viewBox="0 0 17 761"><path d="M5.3 10.8 L8.5 7.6 L11.7 10.8 M5.3 751.5 L8.5 754.7 L11.7 751.5" stroke="#858585" stroke-width="1.4" fill="none"/></svg>
</div>
</div>
</body></html>
